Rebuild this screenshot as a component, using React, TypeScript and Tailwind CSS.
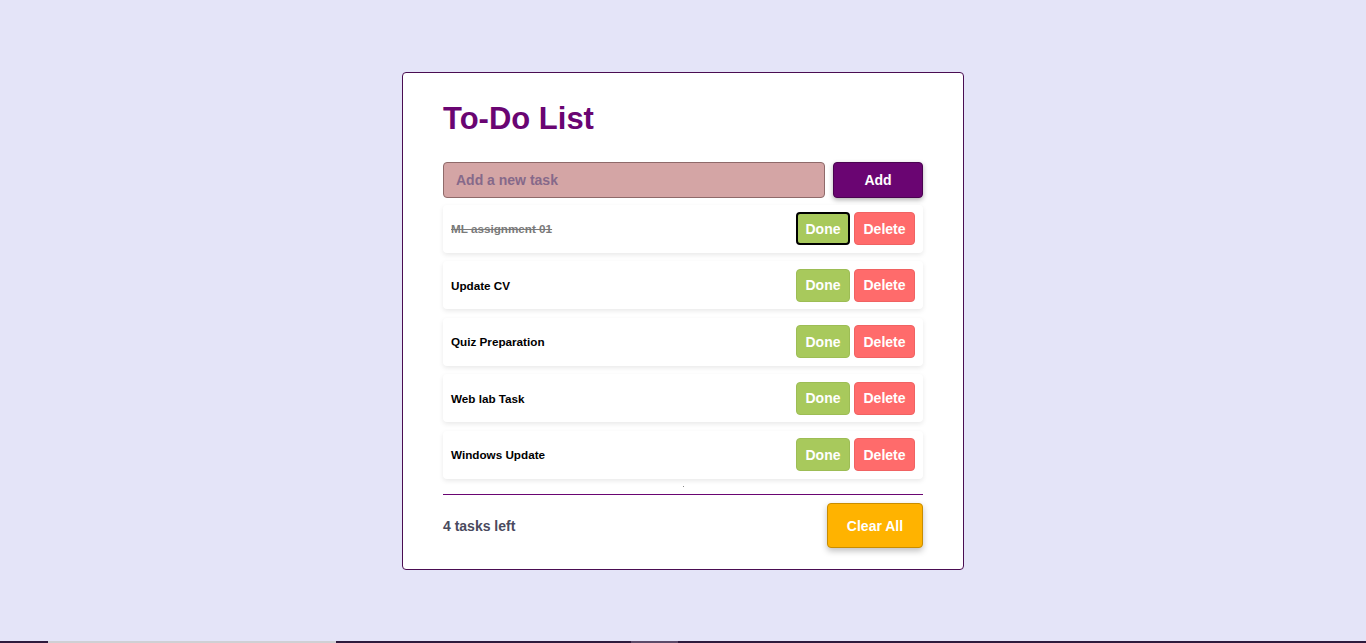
import React from "react";

const tasks = [
  { text: "ML assignment 01", done: true },
  { text: "Update CV", done: false },
  { text: "Quiz Preparation", done: false },
  { text: "Web lab Task", done: false },
  { text: "Windows Update", done: false },
];

const TaskRow = ({ text, done, focused }: { text: string; done: boolean; focused?: boolean }) => {
  return (
    <div className="flex h-12 items-center justify-between rounded-[4px] bg-white pl-2 pr-2 shadow-[0_2px_5px_rgba(0,0,0,0.09)]">
      <span
        className={
          done
            ? "pt-px text-[11.7px] font-bold text-[#7a7a7a] line-through"
            : "pt-px text-[11.7px] font-bold text-black"
        }
      >
        {text}
      </span>
      <div className="flex gap-1">
        <button
          className={
            focused
              ? "h-[33px] w-[54px] rounded-[4px] border-2 border-black bg-[#a8c95c] pt-px text-[14px] font-bold text-white"
              : "h-[33px] w-[54px] rounded-[4px] border border-[#9dbd55] bg-[#a8c95c] pt-px text-[14px] font-bold text-white"
          }
        >
          Done
        </button>
        <button className="h-[33px] w-[61px] rounded-[4px] border border-[#f06262] bg-[#ff6b6b] pt-px text-[14px] font-bold text-white">
          Delete
        </button>
      </div>
    </div>
  );
};

export default function App() {
  return (
    <div className="flex min-h-[643px] flex-col bg-[#e4e4f8] font-['Liberation_Sans',Arial,sans-serif]">
      <div className="flex h-[641px] items-center justify-center">
        <div className="w-[562px] rounded-[4px] border border-[#4a0d52] bg-white px-10 pb-[21px] pt-[27px]">
          <h1 className="mb-[25px] text-[31px] font-bold leading-[37px] text-[#6a0572]">To-Do List</h1>

          <div className="flex gap-2">
            <input
              placeholder="Add a new task"
              className="h-9 w-[382px] rounded-[4px] border border-[#8f6a6a] bg-[#d4a5a5] px-3 text-[14px] font-bold text-[#5a3a5a] placeholder:text-[#86698a] outline-none"
            />
            <button className="h-9 w-[90px] rounded-[4px] border border-[#4a0350] bg-[#6a0572] pt-px text-[14px] font-bold text-white shadow-[0_2px_5px_rgba(0,0,0,0.3)]">
              Add
            </button>
          </div>

          <div className="mt-[7px] flex flex-col gap-[8.5px]">
            {tasks.map((t, i) => (
              <TaskRow key={t.text} text={t.text} done={t.done} focused={i === 0} />
            ))}
          </div>

          <div className="flex h-[15px] items-center justify-center">
            <span className="h-px w-px bg-[#888]" />
          </div>

          <div className="h-px bg-[#6a0572]" />

          <div className="mt-2 flex items-center justify-between">
            <span className="mt-[2px] text-[14px] font-bold text-[#4a4a5e]">4 tasks left</span>
            <button className="h-[45px] w-[96px] rounded-[4px] border border-[#c98d00] bg-[#ffb300] pt-[2px] text-[14px] font-bold text-white shadow-[0_3px_6px_rgba(0,0,0,0.25)]">
              Clear All
            </button>
          </div>
        </div>
      </div>

      <div className="flex h-[2px]">
        <div className="w-12 bg-[#2e1a3c]" />
        <div className="w-[288px] bg-[#d0d0d4]" />
        <div className="w-[295px] bg-[#2e1a3c]" />
        <div className="w-[47px] bg-[#5c4a68]" />
        <div className="flex-1 bg-[#2e1a3c]" />
      </div>
    </div>
  );
}
